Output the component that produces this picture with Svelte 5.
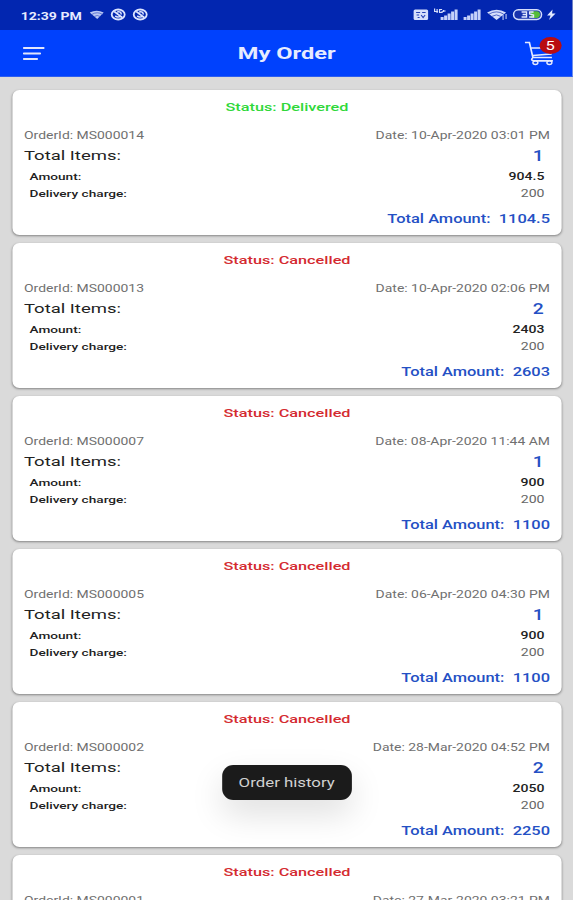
<script>
	const orders = [
		{ id: 'MS000014', status: 'Delivered', date: '10-Apr-2020 03:01 PM', items: 1, amount: '904.5', delivery: 200, total: '1104.5' },
		{ id: 'MS000013', status: 'Cancelled', date: '10-Apr-2020 02:06 PM', items: 2, amount: '2403', delivery: 200, total: '2603' },
		{ id: 'MS000007', status: 'Cancelled', date: '08-Apr-2020 11:44 AM', items: 1, amount: '900', delivery: 200, total: '1100' },
		{ id: 'MS000005', status: 'Cancelled', date: '06-Apr-2020 04:30 PM', items: 1, amount: '900', delivery: 200, total: '1100' },
		{ id: 'MS000002', status: 'Cancelled', date: '28-Mar-2020 04:52 PM', items: 2, amount: '2050', delivery: 200, total: '2250' },
		{ id: 'MS000001', status: 'Cancelled', date: '27-Mar-2020 03:21 PM' }
	];

	let cartCount = 5;
	let toast = 'Order history';
</script>

<div class="screen">
	<div class="statusbar">
		<span class="clock">12:39 PM</span>
		<svg class="left-icons" viewBox="0 0 60 16" preserveAspectRatio="none">
			<path d="M0 5.500Q7 2 14 5.500L7.500 12Z" fill="#b9c7f4" />
			<path d="M2 7.500Q7.500 4 13 7.500M4.500 9.500Q7.500 7.500 10.500 9.500" fill="none" stroke="#3b55c4" stroke-width=".7" />
			{#each [28.5, 50.5] as x}
				<ellipse cx={x} cy="7.500" rx="6.500" ry="5" fill="none" stroke="#dce4ff" stroke-width="1.800" />
				<path d="M{x - 4} 4.500L{x + 4} 10.500M{x - 3} 9Q{x} 11 {x + 2} 9M{x - 1} 5Q{x + 3} 4 {x + 3} 7.500" fill="none" stroke="#dce4ff" stroke-width="1.600" />
			{/each}
		</svg>
		<svg class="right-icons" viewBox="0 0 144 16" preserveAspectRatio="none">
			<rect x="1" y="2.500" width="14.500" height="10.500" rx="1.500" fill="#d5defc" />
			<path d="M3.500 5.500H7.500M9.500 5.500H13M4 8H6.500M8.500 8L10.500 10.500L12.500 8M5 10.500H7" fill="none" stroke="#2441b4" stroke-width="1.100" />
			<path d="M22 1.500V4.500H25.500M24.500 2V6M29.500 2.500H27V5.500H29.500V4M31 3V5M30 4H33" fill="none" stroke="#d5defc" stroke-width="1.200" />
			<g fill="#c5d1fa">
				<path d="M28 10h3v3H28zM31.500 8.500h3v4.500H31.500zM35 6.500h3v6.500H35zM38.500 4.500h3v8.500H38.500zM42 2.500h3v10.500h-3z" />
				<path d="M51 10h3v3H51zM54.500 8.500h3v4.500H54.500zM58 6.500h3v6.500H58zM61.500 4.500h3v8.500H61.500zM65 2.500h3v10.500h-3z" />
			</g>
			<path d="M74.500 5.500Q84 0 93.500 5.500L84 13Z" fill="#d5defc" />
			<path d="M76.500 7Q84 2.800 91 7M79.500 9.300Q84 6.500 88 9.300" fill="none" stroke="#1d37b2" stroke-width=".7" />
			<path d="M90.500 8V13M93.500 7V12" stroke="#d5defc" stroke-width="1" />
			<rect x="101" y="2.800" width="28" height="9.600" rx="4.800" fill="#1732ad" stroke="#d5defc" stroke-width="1.500" />
			<path d="M118 4.200h6a3.400 3.400 0 0 1 0 6.800H118z" fill="#55bd38" />
			<path d="M109 5H114V10H109M110 7.500H114M121 5H117V7L121 8V10H116.500" fill="none" stroke="#e2e9ff" stroke-width="1.300" />
			<path d="M140 2.500L134.500 8.500H138L136.500 13L143 6.500H139.500Z" fill="#e2e9ff" />
		</svg>
	</div>

	<header>
		<svg class="menu" viewBox="0 0 24 16" preserveAspectRatio="none">
			<path d="M1.800 3H21.500M1.800 8.500H18M1.800 14H15" stroke="#e1e5fb" stroke-width="2" stroke-linecap="round" />
		</svg>
		<h1>My Order</h1>
		<div class="cart">
			<svg viewBox="0 0 32 26" preserveAspectRatio="none">
				<path d="M0.500 2.500H5L8.500 17.500H27.500M7 8H27.500L26.500 14L8.500 15.500M8.500 17.500Q5.500 20.500 9.500 20.800H28.500" fill="none" stroke="#e4eaff" stroke-width="1.700" />
				<ellipse cx="11" cy="22.800" rx="2.500" ry="1.700" fill="#0a43e8" stroke="#e4eaff" stroke-width="1.400" />
				<ellipse cx="25" cy="22.800" rx="2.500" ry="1.700" fill="#0a43e8" stroke="#e4eaff" stroke-width="1.400" />
			</svg>
			<span class="badge">{cartCount}</span>
		</div>
	</header>

	<main>
		{#each orders as order}
			<section class="card">
				<div class="status" class:delivered={order.status === 'Delivered'}>Status: {order.status}</div>
				<div class="row meta">
					<span>OrderId: {order.id}</span>
					<span>Date: {order.date}</span>
				</div>
				{#if order.total}
					<div class="row items">
						<span>Total Items:</span>
						<span class="count">{order.items}</span>
					</div>
					<div class="row detail">
						<span>Amount:</span>
						<span class="value">{order.amount}</span>
					</div>
					<div class="row detail">
						<span>Delivery charge:</span>
						<span class="value fee">{order.delivery}</span>
					</div>
					<div class="total">Total Amount: <span>{order.total}</span></div>
				{/if}
			</section>
		{/each}
	</main>

	<div class="toast">{toast}</div>
</div>

<style>
	:global(body) {
		overflow: hidden;
		background: #dadada;
	}

	/* narrow phone layout, widened to fill the window */
	.screen {
		position: relative;
		width: 415.22px;
		height: 900px;
		overflow: hidden;
		transform: scaleX(1.38);
		transform-origin: 0 0;
		background: #dadada;
		font-family: Roboto, sans-serif;
		color: #222;
	}

	.statusbar {
		display: flex;
		align-items: center;
		height: 30px;
		padding: 0 12px 0 15px;
		background: #0226b0;
	}

	.clock {
		width: 49.5px;
		padding-top: 2px;
		font-size: 10.2px;
		font-weight: 700;
		color: #e6ebff;
		white-space: nowrap;
	}

	.left-icons {
		width: 43.5px;
		height: 16px;
	}

	.right-icons {
		width: 104.3px;
		height: 16px;
		margin-left: auto;
	}

	header {
		display: flex;
		align-items: center;
		justify-content: space-between;
		box-sizing: border-box;
		height: 47px;
		padding: 0 12px 0 15.5px;
		background: #0041fd;
		border-bottom: 1px solid #2c5ef0;
	}

	.menu {
		width: 17.4px;
		height: 16px;
	}

	h1 {
		margin: 0 0 0 2.6px;
		font-size: 17.1px;
		font-weight: 700;
		color: #e6ebff;
	}

	.cart {
		position: relative;
		width: 23.2px;
		height: 26px;
	}

	.cart svg {
		width: 100%;
		height: 100%;
	}

	.badge {
		position: absolute;
		top: -3.5px;
		right: -3.7px;
		width: 16.3px;
		height: 17px;
		border-radius: 50%;
		background: #b90c10;
		color: #fff;
		font-size: 12px;
		line-height: 18px;
		text-align: center;
	}

	main {
		display: flex;
		flex-direction: column;
		gap: 8.5px;
		padding: 13px 8px 0 8.7px;
	}

	.card {
		flex: none;
		box-sizing: border-box;
		height: 144.5px;
		padding: 8.5px 8.7px 0;
		border-radius: 5px / 7px;
		background: #fff;
		box-shadow: 0 1px 2px rgba(0, 0, 0, 0.4);
	}

	.status {
		height: 17px;
		margin-bottom: 11px;
		font-size: 11.8px;
		line-height: 17px;
		font-weight: 500;
		text-align: center;
		color: #d42a30;
	}

	.status.delivered {
		color: #2fd83a;
	}

	.row {
		display: flex;
		justify-content: space-between;
	}

	.meta {
		height: 17px;
		font-size: 10.1px;
		line-height: 17px;
		color: #707070;
	}

	.items {
		height: 24px;
		padding-right: 4.5px;
		font-size: 13.4px;
		line-height: 24px;
	}

	.count {
		font-size: 14px;
		font-weight: 500;
		color: #2450c4;
	}

	.detail {
		height: 17px;
		padding: 0 4px;
		font-size: 9.9px;
		line-height: 17.5px;
		font-weight: 500;
	}

	.value {
		font-size: 10.2px;
	}

	.fee {
		font-weight: 400;
		color: #666;
	}

	.total {
		margin-top: 8px;
		font-size: 11.9px;
		line-height: 19px;
		font-weight: 500;
		text-align: right;
		color: #2450c4;
	}

	.total span {
		margin-left: 3px;
	}

	.toast {
		position: absolute;
		left: 161px;
		top: 765px;
		width: 93.5px;
		height: 35px;
		border-radius: 8px / 11px;
		background: #1b1b1b;
		box-shadow: 0 14px 28px rgba(0, 0, 0, 0.13);
		color: #d2d2d2;
		font-size: 12.2px;
		line-height: 37px;
		text-align: center;
	}
</style>
